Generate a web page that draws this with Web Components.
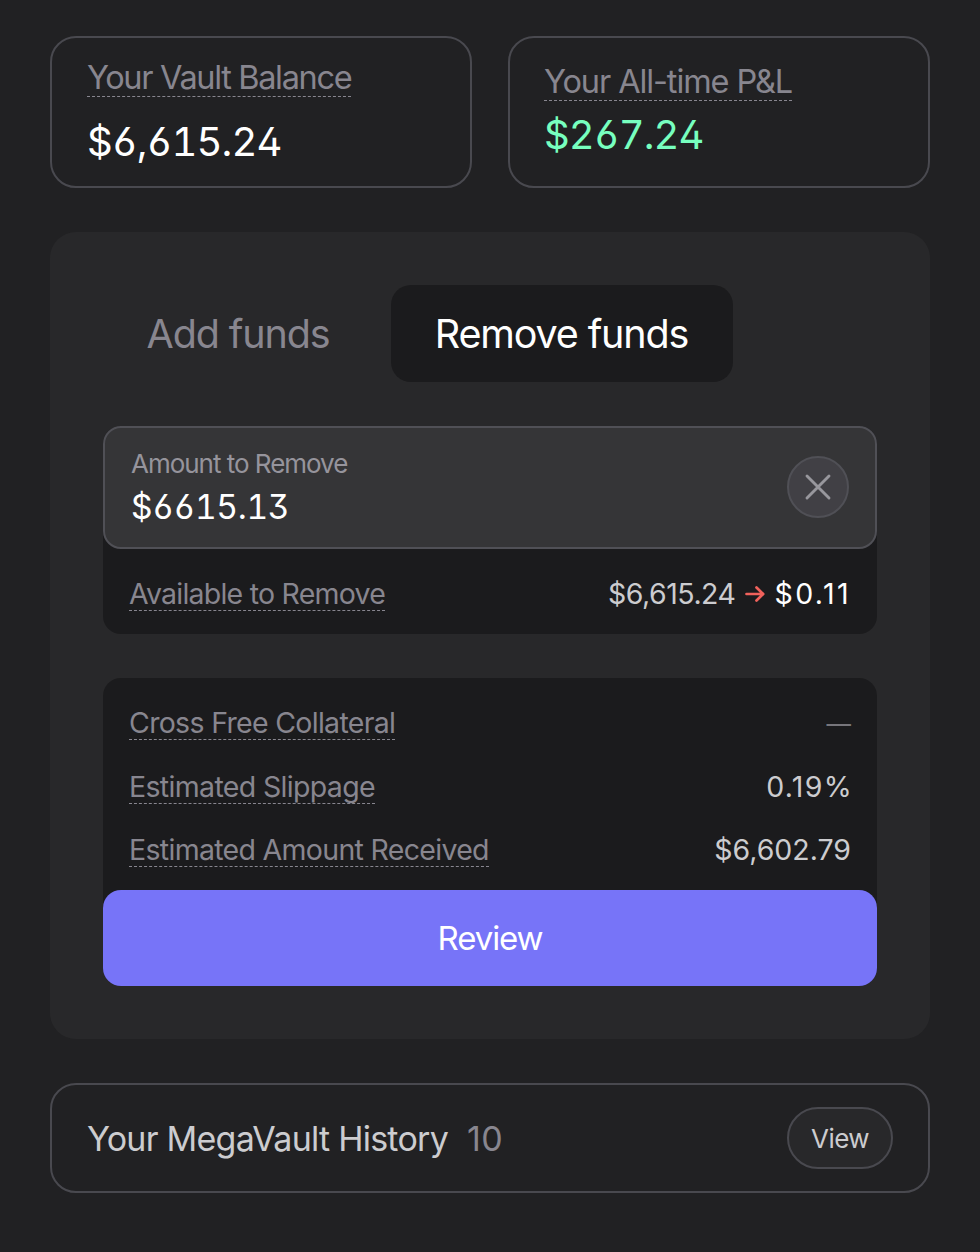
<!DOCTYPE html>
<html lang="en">
<head>
  <meta charset="utf-8">
  <title>MegaVault</title>
  <style>
    body {
      margin: 0;
      background: #212123;
      font-family: Inter, "Liberation Sans", sans-serif;
      --layer-dark: #1b1b1d;
      --layer-panel: #28282a;
      --layer-input: #353537;
      --border: #49494f;
      --border-input: #505056;
      --text-muted: #88868f;
      --text-base: #cccccf;
      --text-bright: #ffffff;
      --accent: #7774f8;
      --positive: #77ffbf;
      --negative: #f1625c;
    }
  </style>
</head>
<body>
  <vault-page>
    <div slot="stats" class="stats">
      <stat-card label="Your Vault Balance" value="$6,615.24" style="--label-y: 23px; --label-ls: -1.34px; --gap: 21px; --value-ls: -0.93px"></stat-card>
      <stat-card label="Your All-time P&amp;L" value="$267.24" positive style="--label-x: 34px; --label-y: 27px; --label-ls: -1.1px; --gap: 10px; --value-ls: -0.95px"></stat-card>
    </div>
    <vault-form slot="form"></vault-form>
    <history-bar slot="history" count="10">Your MegaVault History</history-bar>
  </vault-page>

  <script>
    class VaultPage extends HTMLElement {
      constructor() {
        super();
        this.attachShadow({ mode: 'open' });
      }

      connectedCallback() {
        this.shadowRoot.innerHTML = `
          <style>
            :host {
              display: flex;
              flex-direction: column;
              gap: 44px;
              box-sizing: border-box;
              height: 1252px;
              padding: 36px 50px 0;
            }
            ::slotted(.stats) {
              display: grid;
              grid-template-columns: 1fr 1fr;
              gap: 36px;
            }
          </style>
          <slot name="stats"></slot>
          <slot name="form"></slot>
          <slot name="history"></slot>
        `;
      }
    }

    class StatCard extends HTMLElement {
      constructor() {
        super();
        this.attachShadow({ mode: 'open' });
      }

      connectedCallback() {
        this.shadowRoot.innerHTML = `
          <style>
            :host {
              display: flex;
              flex-direction: column;
              align-items: flex-start;
              gap: var(--gap);
              box-sizing: border-box;
              height: 152px;
              padding: var(--label-y) 34px 0 var(--label-x, 35px);
              border: 2px solid var(--border);
              border-radius: 26px;
              white-space: nowrap;
            }
            .label {
              height: 35px;
              border-bottom: 1px dashed var(--text-muted);
              color: var(--text-muted);
              font-size: 32.5px;
              line-height: 34px;
              letter-spacing: var(--label-ls);
            }
            .value {
              color: var(--text-bright);
              font-size: 40px;
              line-height: 48px;
              letter-spacing: var(--value-ls);
              font-feature-settings: "tnum", "ss01";
            }
            :host([positive]) .value {
              color: var(--positive);
            }
          </style>
          <div class="label"></div>
          <div class="value"></div>
        `;
        this.shadowRoot.querySelector('.label').textContent = this.getAttribute('label');
        this.shadowRoot.querySelector('.value').textContent = this.getAttribute('value');
      }
    }

    class DetailRow extends HTMLElement {
      constructor() {
        super();
        this.attachShadow({ mode: 'open' });
      }

      connectedCallback() {
        this.shadowRoot.innerHTML = `
          <style>
            :host {
              display: flex;
              justify-content: space-between;
              align-items: flex-start;
              color: var(--text-base);
              font-size: 28.5px;
              line-height: 30px;
              white-space: nowrap;
            }
            .label {
              height: 31px;
              border-bottom: 1px dashed var(--text-muted);
              color: var(--text-muted);
              letter-spacing: var(--label-ls, -0.69px);
            }
            .value {
              display: flex;
              align-items: center;
              margin-right: var(--value-shift, 0);
              letter-spacing: var(--value-ls, 0);
            }
          </style>
          <div class="label"></div>
          <div class="value"><slot></slot></div>
        `;
        this.shadowRoot.querySelector('.label').textContent = this.getAttribute('label');
      }
    }

    class FundsTabs extends HTMLElement {
      constructor() {
        super();
        this.attachShadow({ mode: 'open' });
      }

      connectedCallback() {
        this.shadowRoot.innerHTML = `
          <style>
            :host {
              display: flex;
              gap: 17px;
            }
            button {
              width: 271px;
              height: 97px;
              padding: 1px 1px 0 0;
              border: 0;
              border-radius: 20px;
              background: none;
              color: var(--text-muted);
              font: 39.5px/96px Inter, "Liberation Sans", sans-serif;
              letter-spacing: -1.13px;
              white-space: nowrap;
            }
            button.active {
              width: 342px;
              background: var(--layer-dark);
              color: var(--text-bright);
              letter-spacing: -1.15px;
            }
          </style>
          <button>Add funds</button>
          <button class="active">Remove funds</button>
        `;
      }
    }

    class AmountInput extends HTMLElement {
      constructor() {
        super();
        this.attachShadow({ mode: 'open' });
      }

      connectedCallback() {
        this.shadowRoot.innerHTML = `
          <style>
            :host {
              display: flex;
              justify-content: space-between;
              align-items: flex-start;
              box-sizing: border-box;
              height: 123px;
              padding: 0 26px;
              border: 2px solid var(--border-input);
              border-radius: 18px;
              background: var(--layer-input);
              white-space: nowrap;
            }
            .text {
              padding-top: 20px;
            }
            .label {
              color: #96949c;
              font-size: 26px;
              line-height: 32px;
              letter-spacing: -1.02px;
            }
            .value {
              margin-top: 7px;
              color: var(--text-bright);
              font-size: 33.5px;
              line-height: 40px;
              letter-spacing: -0.33px;
              font-feature-settings: "tnum", "ss01";
            }
            button {
              display: grid;
              place-items: center;
              box-sizing: border-box;
              width: 62px;
              height: 62px;
              margin-top: 28px;
              padding: 0;
              border: 2px solid var(--border-input);
              border-radius: 50%;
              background: #414045;
            }
          </style>
          <div class="text">
            <div class="label">Amount to Remove</div>
            <div class="value">$6615.13</div>
          </div>
          <button aria-label="Clear">
            <svg width="28" height="28" viewBox="0 0 28 28" fill="none" stroke="#98979d" stroke-width="2.9" stroke-linecap="round">
              <path d="M3 3 25 25M25 3 3 25"/>
            </svg>
          </button>
        `;
      }
    }

    class VaultForm extends HTMLElement {
      constructor() {
        super();
        this.attachShadow({ mode: 'open' });
      }

      connectedCallback() {
        this.shadowRoot.innerHTML = `
          <style>
            :host {
              display: block;
              box-sizing: border-box;
              height: 807px;
              padding: 53px;
              border-radius: 26px;
              background: var(--layer-panel);
            }
            .box {
              box-sizing: border-box;
              border-radius: 18px;
              background: var(--layer-dark);
            }
            .amount {
              height: 208px;
              margin: 44px 0;
            }
            .amount detail-row {
              padding: 30px 26px 0;
            }
            .receipt {
              height: 308px;
            }
            .rows {
              display: flex;
              flex-direction: column;
              gap: 31.5px;
              height: 182px;
              padding: 30px 26px 0;
            }
            .before {
              letter-spacing: -0.48px;
            }
            .after {
              color: var(--text-bright);
              letter-spacing: 2.4px;
            }
            svg {
              margin: 0 10px 0 9px;
            }
            .empty {
              color: #77767b;
              font-size: 24.5px;
              line-height: 32px;
            }
            .review {
              display: block;
              width: 100%;
              height: 96px;
              padding: 0;
              border: 0;
              border-radius: 18px;
              background: var(--accent);
              color: var(--text-bright);
              font: 33px/97px Inter, "Liberation Sans", sans-serif;
              letter-spacing: -1.1px;
            }
          </style>
          <funds-tabs></funds-tabs>
          <div class="box amount">
            <amount-input></amount-input>
            <detail-row label="Available to Remove" style="--label-ls: -0.77px">
              <span class="before">$6,615.24</span>
              <svg width="20" height="18" viewBox="0 0 20 18" fill="none" stroke="var(--negative)" stroke-width="2.7" stroke-linecap="round" stroke-linejoin="round">
                <path d="M1.5 9H18M11.5 2.5 18.2 9 11.5 15.5"/>
              </svg>
              <span class="after">$0.11</span>
            </detail-row>
          </div>
          <div class="box receipt">
            <div class="rows">
              <detail-row label="Cross Free Collateral"><span class="empty">—</span></detail-row>
              <detail-row label="Estimated Slippage" style="--label-ls: -0.66px; --value-ls: 1.3px; --value-shift: -2px">0.19%</detail-row>
              <detail-row label="Estimated Amount Received">$6,602.79</detail-row>
            </div>
            <button class="review">Review</button>
          </div>
        `;
      }
    }

    class HistoryBar extends HTMLElement {
      constructor() {
        super();
        this.attachShadow({ mode: 'open' });
      }

      connectedCallback() {
        this.shadowRoot.innerHTML = `
          <style>
            :host {
              display: flex;
              align-items: center;
              box-sizing: border-box;
              height: 110px;
              padding: 0 35px;
              border: 2px solid var(--border);
              border-radius: 26px;
              color: var(--text-base);
              font-size: 34px;
              line-height: 40px;
              white-space: nowrap;
            }
            .title, .count {
              padding-top: 2px;
            }
            .title {
              letter-spacing: -0.75px;
            }
            .count {
              margin: 0 auto 0 19px;
              color: var(--text-muted);
              letter-spacing: 0.4px;
            }
            button {
              box-sizing: border-box;
              width: 106px;
              height: 62px;
              padding: 1px 0 0;
              border: 2px solid var(--border);
              border-radius: 31px;
              background: var(--layer-panel);
              color: var(--text-base);
              font: 26px/58px Inter, "Liberation Sans", sans-serif;
              letter-spacing: -0.6px;
            }
          </style>
          <div class="title"><slot></slot></div>
          <div class="count">${this.getAttribute('count')}</div>
          <button>View</button>
        `;
      }
    }

    customElements.define('vault-page', VaultPage);
    customElements.define('stat-card', StatCard);
    customElements.define('detail-row', DetailRow);
    customElements.define('funds-tabs', FundsTabs);
    customElements.define('amount-input', AmountInput);
    customElements.define('vault-form', VaultForm);
    customElements.define('history-bar', HistoryBar);
  </script>
</body>
</html>
